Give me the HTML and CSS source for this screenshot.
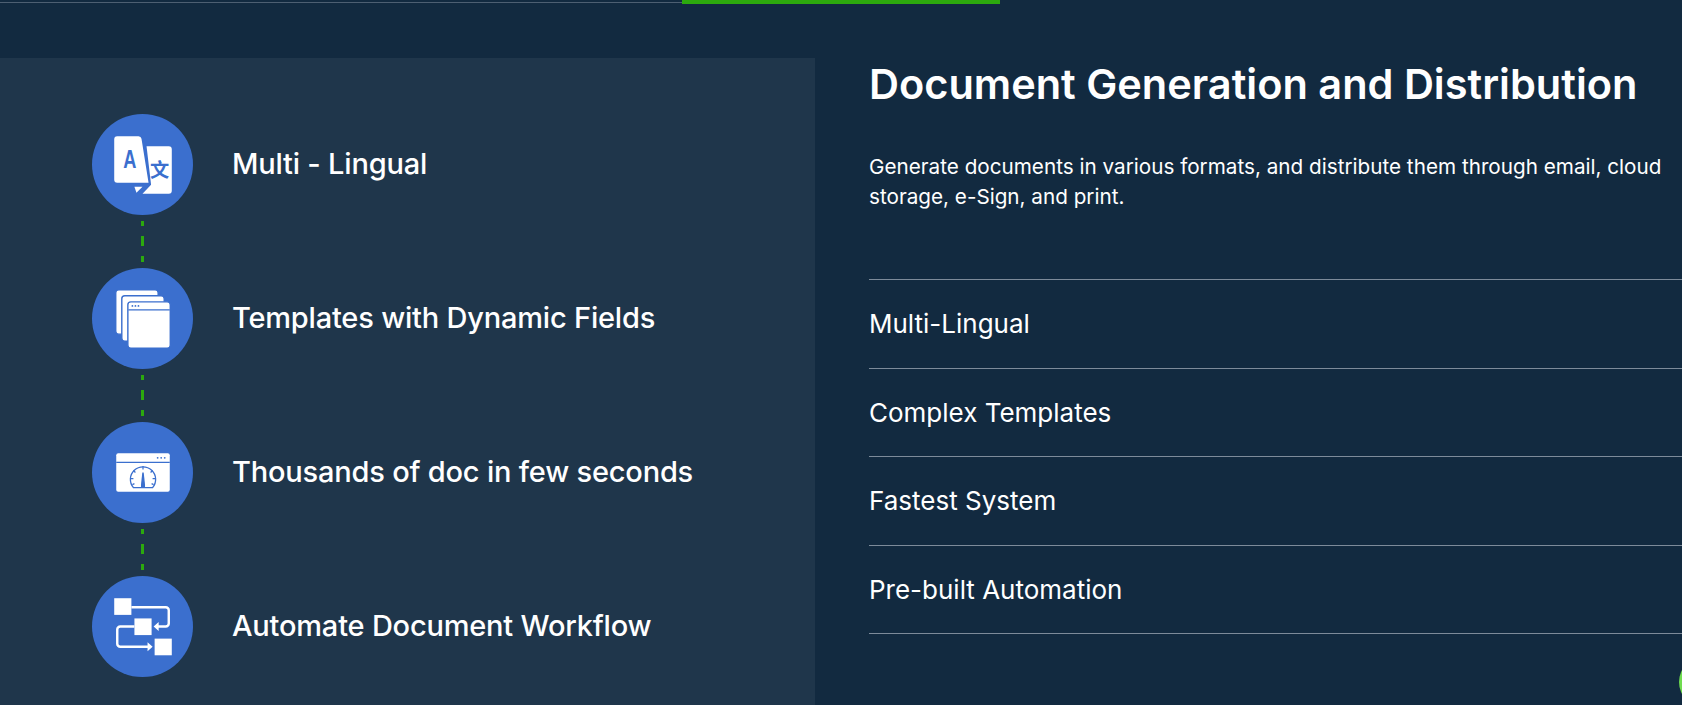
FILE: index.html
```html
<!DOCTYPE html>
<html lang="en">
<head>
<meta charset="utf-8">
<title>Document Generation and Distribution</title>
<link rel="stylesheet" href="styles.css">
</head>
<body>
<div class="tabs">
  <div class="tab-rule"></div>
  <div class="tab-active"></div>
</div>
<main class="content">
  <section class="steps">
    <div class="step">
      <span class="badge">
        <svg class="icon" viewBox="0 0 100 100">
          <path fill="#fff" d="M25 22H46a3 3 0 0 1 3 2.500L56 68H25a3 3 0 0 1-3-3V25a3 3 0 0 1 3-3Z"/>
          <path fill="#fff" d="M54 32H76a3 3 0 0 1 3 3V76a3 3 0 0 1-3 3H50L58.500 70Z"/>
          <path fill="#fff" d="M42 72H50L44 78Z"/>
          <text class="glyph-a" x="31" y="53" textLength="13" lengthAdjust="spacingAndGlyphs">A</text>
          <text class="glyph-b" x="57.500" y="62">文</text>
        </svg>
      </span>
      <h3 class="step-title">Multi - Lingual</h3>
    </div>
    <div class="link"></div>
    <div class="step">
      <span class="badge">
        <svg class="icon" viewBox="0 0 100 100">
          <g fill="#fff" stroke="#3b6fce" stroke-width="1.4">
            <rect x="23.500" y="21.500" width="42" height="44" rx="3"/>
            <rect x="29.500" y="27.500" width="42" height="45" rx="3"/>
            <rect x="35.500" y="33.500" width="42" height="46" rx="3"/>
          </g>
          <path stroke="#3b6fce" stroke-width="1.2" d="M36 41.500H77"/>
          <g fill="#3b6fce"><circle cx="40" cy="37.500" r=".9"/><circle cx="43" cy="37.500" r=".9"/><circle cx="46" cy="37.500" r=".9"/></g>
        </svg>
      </span>
      <h3 class="step-title">Templates with Dynamic Fields</h3>
    </div>
    <div class="link"></div>
    <div class="step">
      <span class="badge">
        <svg class="icon" viewBox="0 0 100 100">
          <rect fill="#fff" x="24" y="31" width="53" height="38" rx="2"/>
          <path stroke="#3b6fce" stroke-width="1.3" d="M24 40H77"/>
          <g fill="#3b6fce"><circle cx="65" cy="35.500" r=".9"/><circle cx="68.500" cy="35.500" r=".9"/><circle cx="72" cy="35.500" r=".9"/></g>
          <path fill="none" stroke="#3b6fce" stroke-width="1.3" d="M41 65A12.500 12.500 0 1 1 60 65Z"/>
          <path fill="none" stroke="#3b6fce" stroke-width="1.2" d="M50.500 43.500V47M41 48l2 2M60 48l-2 2M38 56h3M63 56h-3M40 62l2-1M61 62l-2-1"/>
          <path fill="#3b6fce" d="M49.800 50H51.200L52.500 62V65H48.500V62Z"/>
        </svg>
      </span>
      <h3 class="step-title">Thousands of doc in few seconds</h3>
    </div>
    <div class="link"></div>
    <div class="step">
      <span class="badge">
        <svg class="icon" viewBox="0 0 100 100">
          <g fill="#fff"><rect x="22" y="22" width="17" height="16.500"/><rect x="42" y="42" width="17" height="16.500"/><rect x="62" y="62" width="17" height="16.500"/></g>
          <path fill="none" stroke="#fff" stroke-width="2.400" d="M39 31H73a3 3 0 0 1 3 3V47a3 3 0 0 1-3 3H64M42 50H28a3 3 0 0 0-3 3V67a3 3 0 0 0 3 3H56"/>
          <path fill="#fff" d="M61 50l5-4.500V54.500ZM60 70l-5-4.500V74.500Z"/>
        </svg>
      </span>
      <h3 class="step-title">Automate Document Workflow</h3>
    </div>
  </section>
  <section class="detail">
    <h2 class="detail-title">Document Generation and Distribution</h2>
    <p class="detail-text">Generate documents in various formats, and distribute them through email, cloud storage, e-Sign, and print.</p>
    <ul class="features">
      <li>Multi-Lingual</li>
      <li>Complex Templates</li>
      <li>Fastest System</li>
      <li>Pre-built Automation</li>
    </ul>
  </section>
</main>
<div class="chat-dot"></div>
</body>
</html>
```
FILE: styles.css
```css
* { box-sizing: border-box; }
html, body { margin: 0; height: 100%; }
body {
  background: #122a40;
  color: #fff;
  font-family: "Inter", "Noto Sans", sans-serif;
  overflow: hidden;
  position: relative;
}
.tabs { display: flex; height: 58px; align-items: flex-start; }
.tab-rule { width: 682px; height: 1px; margin-top: 2px; background: #4d5f72; }
.tab-active { width: 318px; height: 4px; background: #2ca90e; }
.content { display: flex; height: 647px; }
.steps {
  flex: 0 0 815px;
  background: #1f364b;
  padding: 56px 0 0 92px;
}
.step { display: flex; align-items: center; gap: 39px; height: 100px; }
.badge {
  flex: 0 0 101px;
  height: 101px;
  border-radius: 50%;
  background: #3b6fce;
  display: flex;
}
.icon { width: 101px; height: 101px; }
.glyph-a { font: 700 26px "Liberation Sans", sans-serif; fill: #3b6fce; }
.glyph-b { font: 700 19px "Noto Sans CJK SC", sans-serif; fill: #3b6fce; }
.step-title { margin: 0 0 2px; font-size: 29px; font-weight: 500; letter-spacing: -0.2px; white-space: nowrap; }
.link {
  width: 2.500px;
  height: 41px;
  margin: 7px 0 6px 49px;
  background: linear-gradient(#2ca90e 50%, transparent 50%) 0 -5px / 2.500px 20px repeat-y;
}
.detail { flex: 1; padding-left: 54px; min-width: 0; }
.detail-title { margin: 0; font-size: 41.500px; line-height: 52px; font-weight: 600; white-space: nowrap; }
.detail-text { margin: 42px 0 0; font-size: 20.700px; line-height: 30px; max-width: 800px; }
.features { list-style: none; margin: 67px 0 0; padding: 0; border-top: 1px solid #7d8b9a; }
.features li { height: 88.500px; line-height: 87.500px; font-size: 26px; border-bottom: 1px solid #7d8b9a; }
.chat-dot {
  position: absolute;
  right: -47px;
  top: 657px;
  width: 50px;
  height: 50px;
  border-radius: 50%;
  background: #6fdc4f;
}
```
